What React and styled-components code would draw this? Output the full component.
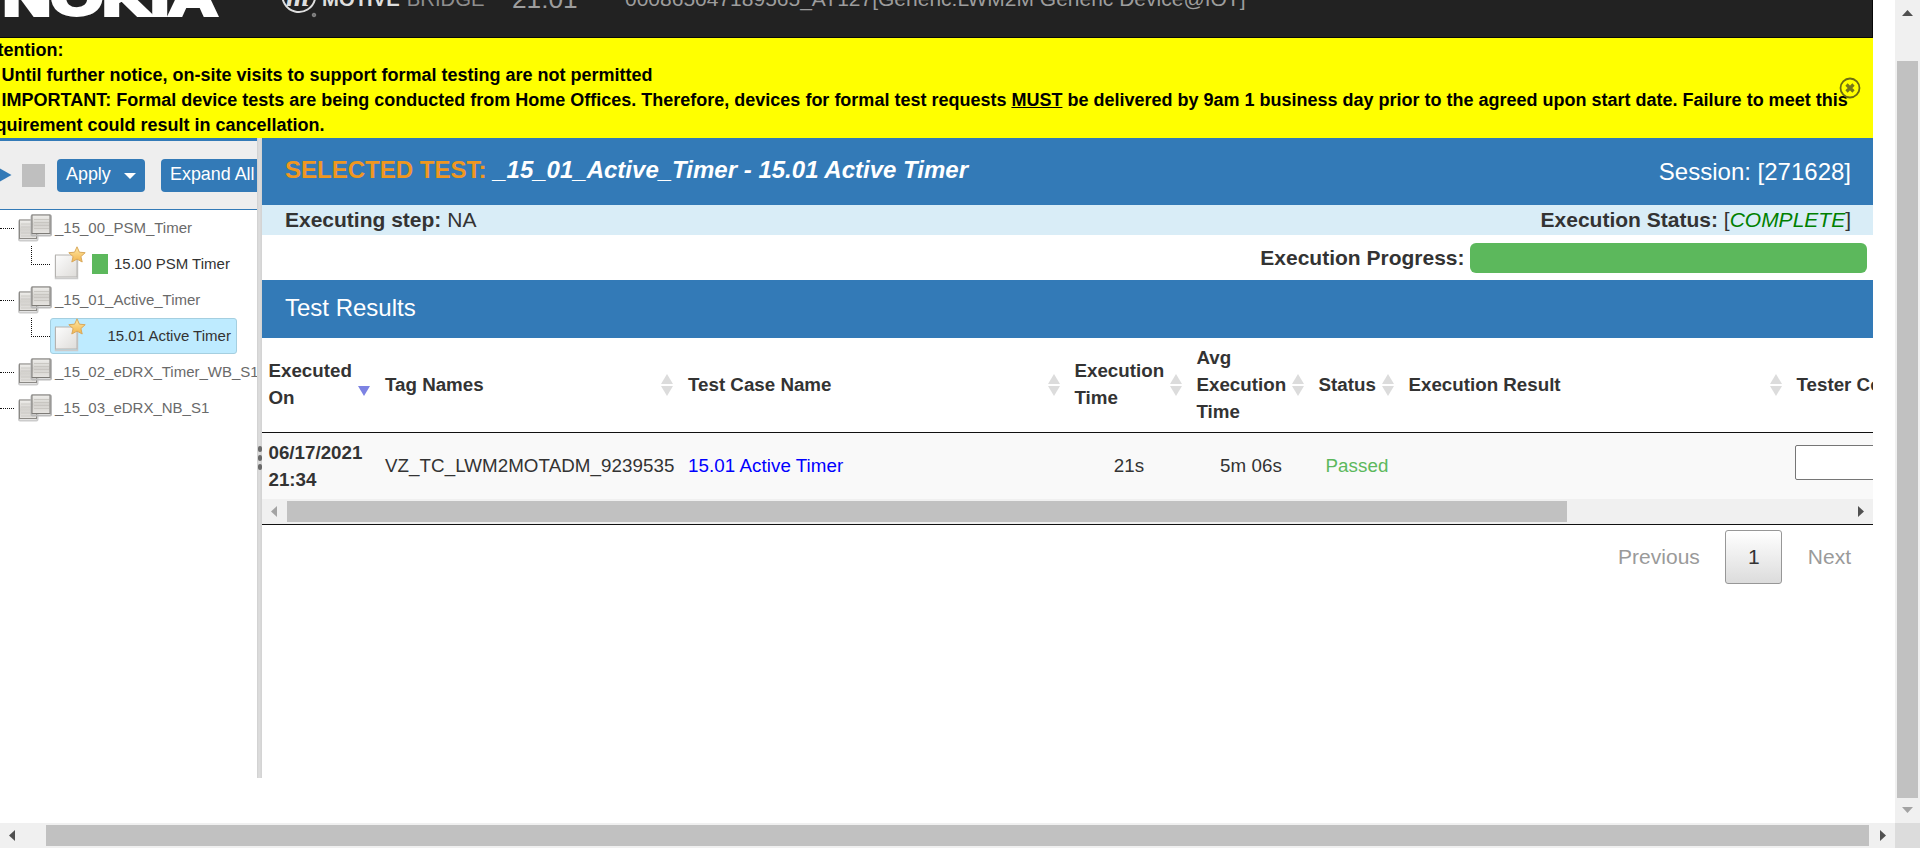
import React from 'react';
import styled, { createGlobalStyle } from 'styled-components';

const BLUE = '#337ab7';
const GREEN = '#5cb85c';

const GlobalStyle = createGlobalStyle`
  *, *::before, *::after { box-sizing: border-box; }
  html, body { margin: 0; padding: 0; background: #fff; overflow: hidden; }
  body { font-family: "Liberation Sans", Arial, Helvetica, sans-serif; color: #333; font-size: 17.5px; }
`;

const Window = styled.div`
  display: grid;
  grid-template-columns: 1895px 25px;
  grid-template-rows: 823px 25px;
  width: 1920px;
  height: 848px;
  overflow: hidden;
`;

const Page = styled.div`
  width: 1873px;
  height: 823px;
  overflow: hidden;
`;

/* Top navigation bar, scrolled partly out of view */
const NavBar = styled.header`
  height: 38px;
  overflow: hidden;
  background: #222;
  border: solid #080808;
  border-width: 0 1px 1px 0;
`;

const NavRow = styled.div`
  display: flex;
  align-items: center;
  height: 78px;
  margin-top: -40px;
  color: #9d9d9d;
  white-space: nowrap;
`;

const Brand = styled.svg`
  flex: none;
  width: 220px;
  height: 50px;
`;

const Product = styled.div`
  display: flex;
  align-items: center;
  width: 232px;
  margin-left: 60px;
`;

const ProductMark = styled.svg`
  flex: none;
  width: 42px;
  height: 44px;
`;

const ProductName = styled.span`
  font-size: 20.3px;
  font-weight: ${p => (p.$strong ? 700 : 400)};
  color: ${p => (p.$strong ? '#dedede' : '#8e8e8e')};
  margin-right: ${p => (p.$strong ? '7px' : 0)};
`;

const Clock = styled.span`
  font-size: 26.25px;
  width: 113px;
`;

const Device = styled.span`
  font-size: 21px;
`;

const Notice = styled.section`
  position: relative;
  height: 100px;
  background: #ff0;
  color: #000;
  font-weight: 700;
  font-size: 18px;
  line-height: 25px;
  overflow: hidden;
`;

const NoticeText = styled.div`
  margin-left: -21.5px;
  white-space: nowrap;
`;

const ItemNumber = styled.span`
  margin-right: 3px;
`;

const CloseIcon = styled.svg`
  position: absolute;
  right: 12px;
  top: 39px;
  width: 22px;
  height: 22px;
`;

const Split = styled.main`
  display: grid;
  grid-template-columns: 257px 5px 1611px;
  height: 640px;
`;

const SidePane = styled.aside`
  overflow: hidden;
`;

const Toolbar = styled.div`
  display: flex;
  align-items: center;
  height: 72px;
  background: #eee;
  border-top: 3px solid ${BLUE};
  border-bottom: 1px solid ${BLUE};
`;

const PlayIcon = styled.svg`
  flex: none;
  width: 12px;
  height: 14px;
  margin-right: 10px;
`;

const StopIcon = styled.span`
  flex: none;
  width: 23px;
  height: 23px;
  margin-right: 12px;
  background: #bfbfbf;
`;

const Button = styled.button`
  flex: none;
  display: flex;
  align-items: center;
  gap: 13px;
  height: 33px;
  width: ${p => p.$width}px;
  margin: 0 16px 0 0;
  padding: 0 9px 1px;
  border: 0;
  border-radius: 4px;
  background: ${BLUE};
  color: #fff;
  font: 17.9px "Liberation Sans", Arial, sans-serif;
  white-space: nowrap;
`;

const Caret = styled.span`
  margin-top: 2px;
  border: solid transparent;
  border-width: 6px 6px 0;
  border-top-color: #fff;
`;

const Branch = styled.div`
  display: flex;
  align-items: center;
  height: 36px;
  font-size: 15px;
  color: #6a6a6a;
  white-space: nowrap;
`;

const Dots = styled.span`
  flex: none;
  width: 14px;
  margin-right: 4px;
  border-top: 1px dotted #111;
`;

const Elbow = styled.span`
  flex: none;
  align-self: flex-start;
  width: 19px;
  height: 19px;
  margin-left: 31px;
  border: dotted #111;
  border-width: 0 0 1px 1px;
`;

const Leaf = styled.div`
  display: flex;
  align-items: center;
  width: 187px;
  height: 36px;
  padding-left: 3px;
  border: 1px solid ${p => (p.$selected ? '#a5cfe0' : 'transparent')};
  border-radius: 3px;
  background: ${p => (p.$selected ? '#beebff' : 'transparent')};
  color: #333;
`;

const Passed = styled.span`
  width: 16px;
  height: 20px;
  margin: -1px 6px 0 4px;
  background: ${GREEN};
`;

const NodeLabel = styled.span`
  padding-bottom: 2px;
  margin-left: ${p => (p.$inset ? '19.5px' : 0)};
`;

const Splitter = styled.div`
  display: flex;
  flex-direction: column;
  align-items: center;
  justify-content: center;
  gap: 3px;
  background: linear-gradient(to right, #cfcfcf, #dedede 40%, #d2d2d2);
`;

const GripDot = styled.span`
  width: 4px;
  height: 6px;
  border-radius: 2px;
  background: #6a6a6a;
`;

const Content = styled.section`
  min-width: 0;
  font-size: 21px;
`;

const TitleBar = styled.div`
  display: flex;
  justify-content: space-between;
  height: ${p => p.$height}px;
  padding: ${p => p.$top}px 22px 0 23px;
  background: ${BLUE};
  color: #fff;
  font-size: 24px;
  line-height: 28px;
  white-space: nowrap;
`;

const Title = styled.h2`
  margin: 0;
  font-size: 24.03px;
  font-weight: 700;
  line-height: 28px;
`;

const TitleTag = styled.span`
  color: #f0971f;
`;

const SessionText = styled.span`
  margin-top: 2px;
`;

const StatusBar = styled.div`
  display: flex;
  justify-content: space-between;
  height: 30px;
  padding: 0 22px 0 23px;
  background: #d9edf7;
  line-height: 30px;
`;

const Complete = styled.em`
  color: #008000;
`;

const ProgressRow = styled.div`
  display: flex;
  align-items: center;
  justify-content: flex-end;
  gap: 5.500px;
  height: 45px;
  padding: 1px 6px 0 0;
`;

const ProgressBar = styled.div`
  width: 397px;
  height: 30px;
  border-radius: 6px;
  background: ${GREEN};
`;

const TableView = styled.div`
  width: 1611px;
  height: 187px;
  overflow: hidden;
  border-bottom: 1px solid #111;
  font-size: 18.75px;
  line-height: 27px;
`;

const TableRow = styled.div`
  display: grid;
  grid-template-columns: 116.5px 303px 386.5px 122px 122px 90px 388px 300px;
  width: 1828px;
  height: ${p => (p.$head ? 95 : 66)}px;
  background: ${p => (p.$head ? '#fff' : '#f9f9f9')};
  border-bottom: ${p => (p.$head ? '1px solid #111' : '0')};
  font-weight: ${p => (p.$head ? 700 : 400)};
`;

const HeadCell = styled.div`
  display: flex;
  align-items: center;
  justify-content: space-between;
  padding: 0 6.5px 2px;
`;

const Cell = styled.div`
  display: flex;
  align-items: center;
  justify-content: ${p => (p.$center ? 'center' : 'flex-start')};
  padding: 0 6.5px ${p => (p.$bold ? 0 : 2)}px;
  font-weight: ${p => (p.$bold ? 700 : 400)};
  letter-spacing: ${p => (p.$bold ? 0 : '.06px')};
  color: ${p => p.$color || '#333'};
  white-space: ${p => (p.$bold ? 'normal' : 'nowrap')};
`;

const SortIcon = styled.svg`
  flex: none;
  width: 16px;
  height: 26px;
  margin-top: 2px;
`;

const CommentInput = styled.input`
  width: 240px;
  height: 35px;
  margin: -5px 0 0 -1.500px;
  border: 1px solid #767676;
  border-radius: 2px;
  background: #fff;
`;

const Pager = styled.nav`
  display: flex;
  align-items: center;
  justify-content: flex-end;
  gap: 25.500px;
  height: 64px;
  padding: 0 22px 0 0;
  color: #9a9a9a;
`;

const PageButton = styled.button`
  width: 57px;
  height: 54px;
  border: 1px solid #979797;
  border-radius: 3px;
  padding: 0;
  background: linear-gradient(to bottom, #fff 0%, #dcdcdc 100%);
  color: #333;
  font: 21px "Liberation Sans", Arial, sans-serif;
`;

/* Scroll bars */
const Bar = styled.div`
  display: flex;
  flex-direction: ${p => (p.$vertical ? 'column' : 'row')};
  align-items: center;
  justify-content: space-between;
  width: ${p => (p.$vertical ? '25px' : 'auto')};
  height: ${p => (p.$vertical ? 'auto' : '25px')};
  padding: ${p => (p.$vertical ? '10px 0' : '0 9px')};
  background: #f0f0f0;
`;

const Thumb = styled.div`
  width: ${p => (p.$vertical ? '21px' : 'auto')};
  height: ${p => (p.$vertical ? 'auto' : '21px')};
  flex: 1;
  margin: ${p => (p.$vertical ? `${p.$before}px 0 ${p.$after}px` : `0 ${p.$after}px 0 ${p.$before}px`)};
  background: #c1c1c1;
`;

const Corner = styled.div`
  background: #dcdcdc;
`;

const ArrowSvg = styled.svg`
  flex: none;
`;

const arrowPaths = {
  left: ['6', '11', 'M6 0V11L0 5.5Z'],
  right: ['6', '11', 'M0 0V11L6 5.5Z'],
  up: ['11', '6', 'M0 6H11L5.5 0Z'],
  down: ['11', '6', 'M0 0H11L5.5 6Z'],
};

const Arrow = ({ dir, dim }) => {
  const [w, h, d] = arrowPaths[dir];
  return (
    <ArrowSvg width={w} height={h}>
      <path d={d} fill={dim ? '#a3a3a3' : '#505050'} />
    </ArrowSvg>
  );
};

const Sort = ({ active }) => (
  <SortIcon viewBox="0 0 16 26">
    {!active && <path d="M8 2L14 12H2Z" fill="#dcdcdc" />}
    <path d="M2 14H14L8 24Z" fill={active ? '#7d83e3' : '#dcdcdc'} />
  </SortIcon>
);

const NodeIcon = styled.svg`
  flex: none;
`;

const FolderIcon = () => (
  <NodeIcon width="37" height="30" viewBox="0 0 37 30">
    <defs>
      <linearGradient id="sheet" x1="0" y1="0" x2="0" y2="1">
        <stop offset="0" stopColor="#f0efec" />
        <stop offset=".5" stopColor="#d3d1cd" />
        <stop offset="1" stopColor="#e6e4e1" />
      </linearGradient>
    </defs>
    <rect x="1" y="7.5" width="18.5" height="20" rx="1" fill="none" stroke="#ccc" strokeWidth="2" />
    <rect x="1.5" y="7" width="17" height="18.5" fill="url(#sheet)" stroke="#8b8985" />
    <path d="M3 11H13M3 14H13M3 20H17M3 23H17" stroke="#c8c5c1" strokeWidth=".8" />
    <rect x="13.5" y="2.5" width="19.5" height="20" rx="1" fill="none" stroke="#bbb" strokeWidth="2" />
    <rect x="14" y="2" width="18" height="18.5" fill="url(#sheet)" stroke="#7d7b77" />
    <path d="M16 6.5H31M16 9.5H31M16 12.5H31M16 15.5H31" stroke="#c4c1bd" strokeWidth=".8" />
  </NodeIcon>
);

const FileIcon = () => (
  <NodeIcon width="34" height="36" viewBox="0 0 34 36">
    <defs>
      <linearGradient id="paper" x1="0" y1="0" x2="1" y2="1">
        <stop offset="0" stopColor="#fdfdfd" />
        <stop offset="1" stopColor="#dedcd9" />
      </linearGradient>
      <linearGradient id="star" x1="0" y1="0" x2="0" y2="1">
        <stop offset="0" stopColor="#ffe9a6" />
        <stop offset="1" stopColor="#f2b44c" />
      </linearGradient>
    </defs>
    <rect x="1.5" y="10" width="22" height="22.5" fill="none" stroke="#ccc" strokeWidth="1.5" />
    <rect x="1.5" y="9" width="21.5" height="22" fill="url(#paper)" stroke="#b5b3b0" />
    <path
      d="M23 0.8L25.4 6.2L31.2 6.7L26.9 10.6L28.2 16L23 13.1L17.8 16L19.1 10.6L14.8 6.7L20.600 6.2Z"
      fill="url(#star)"
      stroke="#d9a95c"
    />
  </NodeIcon>
);

const Folder = ({ children }) => (
  <Branch><Dots /><FolderIcon /><NodeLabel>{children}</NodeLabel></Branch>
);

const columns = [
  'Executed On', 'Tag Names', 'Test Case Name', 'Execution Time',
  'Avg Execution Time', 'Status', 'Execution Result',
];

export default function App() {
  return (
    <>
      <GlobalStyle />
      <Window>
        <Page>
          <NavBar>
            <NavRow>
              <Brand viewBox="0 0 220 50">
                <text x="3" y="40.5" fontSize="50" fontWeight="700" fill="#fff" stroke="#fff" strokeWidth="4"
                  textLength="214" lengthAdjust="spacingAndGlyphs">NOKIA</text>
              </Brand>
              <Product>
                <ProductMark viewBox="0 0 42 44">
                  <path d="M3 14A16.5 16.5 0 1 0 35 22" fill="none" stroke="#dedede" strokeWidth="2" />
                  <text x="6" y="29" fontSize="30" fontStyle="italic" fontWeight="700" fontFamily="Liberation Serif" fill="#dedede">m</text>
                  <circle cx="34" cy="38" r="1.8" fill="#777" stroke="#aaa" strokeWidth=".6" />
                </ProductMark>
                <ProductName $strong>MOTIVE</ProductName>
                <ProductName>BRIDGE</ProductName>
              </Product>
              <Clock>21:01</Clock>
              <Device>000865047189565_AT127[Generic:LWM2M Generic Device@IOT]</Device>
            </NavRow>
          </NavBar>
          <Notice>
            <NoticeText>
              Attention:<br />
              <ItemNumber>1.</ItemNumber> Until further notice, on-site visits to support formal testing are not permitted<br />
              <ItemNumber>2.</ItemNumber> IMPORTANT: Formal device tests are being conducted from Home Offices. Therefore, devices for formal test requests <u>MUST</u> be delivered by 9am 1 business day prior to the agreed upon start date. Failure to meet this<br />
              requirement could result in cancellation.
            </NoticeText>
            <CloseIcon viewBox="0 0 22 22">
              <circle cx="11" cy="11" r="9.5" fill="none" stroke="#6b6b12" strokeWidth="1.8" />
              <path d="M7.5 7.5L14.5 14.5M14.5 7.5L7.5 14.5" stroke="#77771a" strokeWidth="3.2" />
            </CloseIcon>
          </Notice>
          <Split>
            <SidePane>
              <Toolbar>
                <PlayIcon viewBox="0 0 12 14"><path d="M0 0.5L11.5 7L0 13.5Z" fill={BLUE} /></PlayIcon>
                <StopIcon />
                <Button $width={88}>Apply<Caret /></Button>
                <Button $width={103}>Expand All</Button>
              </Toolbar>
              <Folder>_15_00_PSM_Timer</Folder>
              <Branch>
                <Elbow />
                <Leaf><FileIcon /><Passed /><NodeLabel>15.00 PSM Timer</NodeLabel></Leaf>
              </Branch>
              <Folder>_15_01_Active_Timer</Folder>
              <Branch>
                <Elbow />
                <Leaf $selected><FileIcon /><NodeLabel $inset>15.01 Active Timer</NodeLabel></Leaf>
              </Branch>
              <Folder>_15_02_eDRX_Timer_WB_S1</Folder>
              <Folder>_15_03_eDRX_NB_S1</Folder>
            </SidePane>
            <Splitter><GripDot /><GripDot /><GripDot /></Splitter>
            <Content>
              <TitleBar $height={67} $top={18}>
                <Title><TitleTag>SELECTED TEST:</TitleTag> <i>_15_01_Active_Timer - 15.01 Active Timer</i></Title>
                <SessionText>Session: [271628]</SessionText>
              </TitleBar>
              <StatusBar>
                <span><b>Executing step:</b> NA</span>
                <span><b>Execution Status:</b> [<Complete>COMPLETE</Complete>]</span>
              </StatusBar>
              <ProgressRow><b>Execution Progress:</b><ProgressBar /></ProgressRow>
              <TitleBar $height={58} $top={14}>Test Results</TitleBar>
              <TableView>
                <TableRow $head>
                  {columns.map((name, i) => (
                    <HeadCell key={name}>{name}<Sort active={i === 0} /></HeadCell>
                  ))}
                  <HeadCell>Tester Comments</HeadCell>
                </TableRow>
                <TableRow>
                  <Cell $bold>06/17/2021 21:34</Cell>
                  <Cell>VZ_TC_LWM2MOTADM_9239535</Cell>
                  <Cell $color="#00f">15.01 Active Timer</Cell>
                  <Cell $center>21s</Cell>
                  <Cell $center>5m 06s</Cell>
                  <Cell $center $color={GREEN}>Passed</Cell>
                  <Cell />
                  <Cell><CommentInput /></Cell>
                </TableRow>
                <Bar>
                  <Arrow dir="left" dim />
                  <Thumb $before={10} $after={291} />
                  <Arrow dir="right" />
                </Bar>
              </TableView>
              <Pager>
                <span>Previous</span>
                <PageButton>1</PageButton>
                <span>Next</span>
              </Pager>
            </Content>
          </Split>
        </Page>
        <Bar $vertical>
          <Arrow dir="up" />
          <Thumb $vertical $before={45} $after={9} />
          <Arrow dir="down" dim />
        </Bar>
        <Bar>
          <Arrow dir="left" />
          <Thumb $before={31} $after={11} />
          <Arrow dir="right" />
        </Bar>
        <Corner />
      </Window>
    </>
  );
}
